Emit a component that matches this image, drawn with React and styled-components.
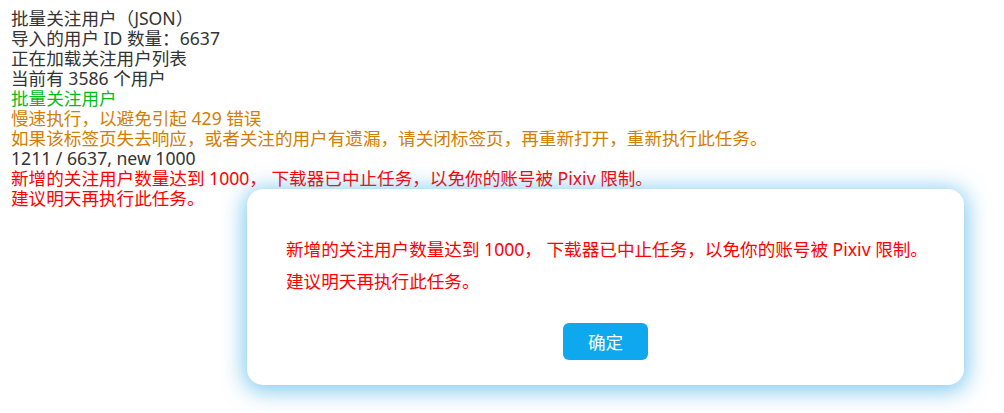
import React from "react";
import styled, { createGlobalStyle } from "styled-components";

const Global = createGlobalStyle`
  html, body { margin: 0; padding: 0; background: #fff; }
  body {
    font-family: "Noto Sans", "Noto Sans CJK SC", sans-serif;
    width: 1004px;
    height: 413px;
    overflow: hidden;
  }
`;

const Page = styled.div`
  position: relative;
  width: 1004px;
  height: 413px;
  padding: 8px 11px;
  box-sizing: border-box;
`;

const Log = styled.div`
  display: flex;
  flex-direction: column;
`;

const colors = {
  normal: "#333",
  success: "#00bd17",
  warning: "#d27e00",
  error: "#ff0000",
};

const Line = styled.p`
  margin: 0;
  font-size: 17.6px;
  line-height: 20px;
  height: 20px;
  white-space: nowrap;
  color: ${(p) => colors[p.$type || "normal"]};
`;

const Dialog = styled.div`
  position: absolute;
  left: 247px;
  top: 189px;
  width: 717px;
  height: 196px;
  box-sizing: border-box;
  background: #fff;
  border-radius: 16px;
  box-shadow: 0 3px 22px 3px rgba(20, 155, 225, 0.55);
  padding: 44px 39px 25px;
  display: flex;
  flex-direction: column;
  justify-content: space-between;
`;

const Msg = styled.p`
  margin: 0;
  color: #ff0000;
  font-size: 17.6px;
  line-height: 32px;
  white-space: nowrap;
`;

const Actions = styled.div`
  display: flex;
  justify-content: center;
`;

const Button = styled.button`
  width: 85px;
  height: 37px;
  border: none;
  border-radius: 6px;
  background: #0ea8ef;
  color: #fff;
  font-family: inherit;
  font-size: 17.6px;
  cursor: pointer;
  padding: 0;
`;

const lines = [
  ["批量关注用户（JSON）"],
  ["导入的用户 ID 数量：6637"],
  ["正在加载关注用户列表"],
  ["当前有 3586 个用户"],
  ["批量关注用户", "success"],
  ["慢速执行，以避免引起 429 错误", "warning"],
  ["如果该标签页失去响应，或者关注的用户有遗漏，请关闭标签页，再重新打开，重新执行此任务。", "warning"],
  ["1211 / 6637, new 1000"],
  ["新增的关注用户数量达到 1000， 下载器已中止任务，以免你的账号被 Pixiv 限制。", "error"],
  ["建议明天再执行此任务。", "error"],
];

export default function App() {
  return (
    <>
      <Global />
      <Page>
        <Log>
          {lines.map(([t, type], i) => (
            <Line key={i} $type={type}>
              {t}
            </Line>
          ))}
        </Log>
        <Dialog>
          <Msg>
            新增的关注用户数量达到 1000， 下载器已中止任务，以免你的账号被 Pixiv 限制。
            <br />
            建议明天再执行此任务。
          </Msg>
          <Actions>
            <Button>确定</Button>
          </Actions>
        </Dialog>
      </Page>
    </>
  );
}
